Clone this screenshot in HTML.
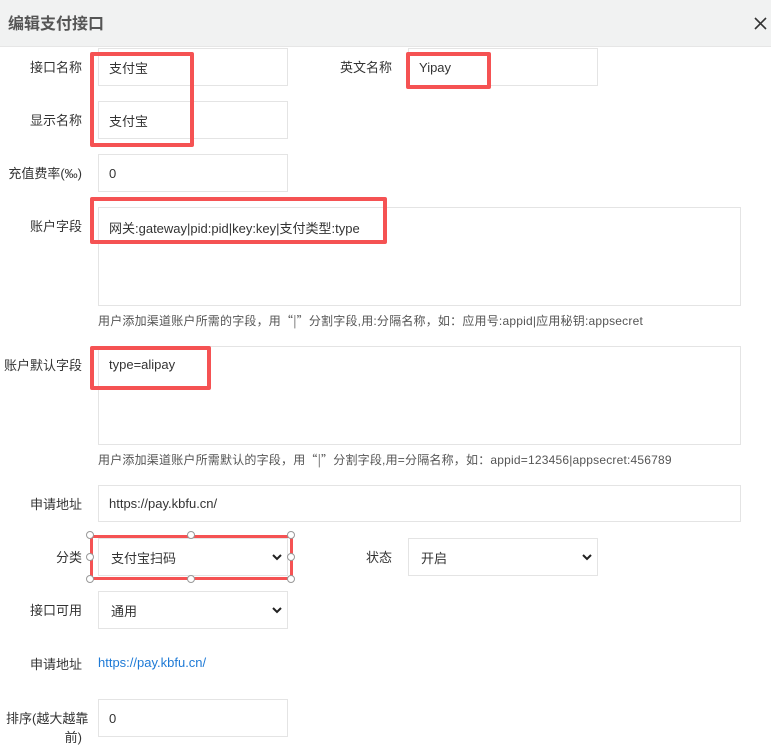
<!DOCTYPE html>
<html><head><meta charset="utf-8"><style>
*{box-sizing:border-box;margin:0;padding:0}
body{width:771px;height:739px;overflow:hidden;background:#fff;font-family:"Liberation Sans","Noto Sans CJK SC",sans-serif;font-size:13px;color:#333;position:relative}
.hd{position:absolute;left:0;top:0;width:771px;height:47px;background:#f1f2f2;border-bottom:1px solid #e6e6e6}
.hd .t{position:absolute;left:8px;top:10px;font-size:16px;font-weight:bold;color:#555}
.x{position:absolute;left:754px;top:17px}
.a{position:absolute}
.lb{position:absolute;width:82px;text-align:right;color:#333;white-space:nowrap}
.in{position:absolute;border:1px solid #e4e4e4;background:#fff;padding-left:10px;color:#333;display:flex;align-items:center}
.ta{align-items:flex-start;padding-top:10px}
.help{position:absolute;left:98px;font-size:12px;color:#555;white-space:nowrap}
.q{font-family:"Noto Sans CJK SC",sans-serif}
.red{position:absolute;border:4px solid #f55253;border-radius:2px}
.sel{padding-left:12px}
.sel svg{position:absolute;right:5px;top:14px}
.h{position:absolute;width:8px;height:8px;border:1px solid #999;border-radius:50%;background:#fff}
</style></head><body>
<div class="hd"><div class="t">编辑支付接口</div>
<svg class="x" width="13" height="13" viewBox="0 0 13 13"><path d="M1 1L12 12M12 1L1 12" stroke="#333" stroke-width="1.6"/></svg></div>

<div class="lb" style="top:57px">接口名称</div>
<div class="in" style="left:98px;top:48px;width:190px;height:38px">支付宝</div>
<div class="lb" style="top:57px;left:310px">英文名称</div>
<div class="in" style="left:408px;top:48px;width:190px;height:38px">Yipay</div>

<div class="lb" style="top:110px">显示名称</div>
<div class="in" style="left:98px;top:101px;width:190px;height:38px">支付宝</div>

<div class="lb" style="top:163px">充值费率(‰)</div>
<div class="in" style="left:98px;top:154px;width:190px;height:38px">0</div>

<div class="lb" style="top:216px">账户字段</div>
<div class="in ta" style="left:98px;top:207px;width:643px;height:99px">网关:gateway|pid:pid|key:key|支付类型:type</div>
<div class="help" style="top:312px;letter-spacing:0.2px">用户添加渠道账户所需的字段，用<span class="q">“|”</span>分割字段,用:分隔名称，如：应用号:appid|应用秘钥:appsecret</div>

<div class="lb" style="top:355px">账户默认字段</div>
<div class="in ta" style="left:98px;top:346px;width:643px;height:99px">type=alipay</div>
<div class="help" style="top:451px;letter-spacing:0.2px">用户添加渠道账户所需默认的字段，用<span class="q">“|”</span>分割字段,用=分隔名称，如：appid=123456|appsecret:456789</div>

<div class="lb" style="top:494px">申请地址</div>
<div class="in" style="left:98px;top:485px;width:643px;height:37px">https://pay.kbfu.cn/</div>

<div class="lb" style="top:547px">分类</div>
<div class="in sel" style="left:98px;top:538px;width:190px;height:38px">支付宝扫码<svg width="10" height="8" viewBox="0 0 10 8"><path d="M1 2L5 6L9 2" stroke="#222" stroke-width="2" fill="none"/></svg></div>
<div class="lb" style="top:547px;left:310px">状态</div>
<div class="in sel" style="left:408px;top:538px;width:190px;height:38px">开启<svg width="10" height="8" viewBox="0 0 10 8"><path d="M1 2L5 6L9 2" stroke="#222" stroke-width="2" fill="none"/></svg></div>

<div class="lb" style="top:600px">接口可用</div>
<div class="in sel" style="left:98px;top:591px;width:190px;height:38px">通用<svg width="10" height="8" viewBox="0 0 10 8"><path d="M1 2L5 6L9 2" stroke="#222" stroke-width="2" fill="none"/></svg></div>

<div class="lb" style="top:654px">申请地址</div>
<div class="a" style="left:98px;top:655px;color:#1e7ad6">https://pay.kbfu.cn/</div>

<div class="lb" style="top:708px;width:84px;text-align:left;left:6px">排序(越大越靠</div>
<div class="lb" style="top:727px;left:0;width:82px">前)</div>
<div class="in" style="left:98px;top:699px;width:190px;height:38px">0</div>

<div class="red" style="left:90px;top:52px;width:104px;height:95px"></div>
<div class="red" style="left:406px;top:52px;width:85px;height:37px"></div>
<div class="red" style="left:90px;top:197px;width:297px;height:47px"></div>
<div class="red" style="left:90px;top:346px;width:121px;height:44px"></div>
<div class="red" style="left:90px;top:535px;width:203px;height:45px;border-width:3px"></div>
<div class="h" style="left:86px;top:531px"></div><div class="h" style="left:187px;top:531px"></div><div class="h" style="left:287px;top:531px"></div>
<div class="h" style="left:86px;top:553px"></div><div class="h" style="left:287px;top:553px"></div>
<div class="h" style="left:86px;top:575px"></div><div class="h" style="left:187px;top:575px"></div><div class="h" style="left:287px;top:575px"></div>
</body></html>
